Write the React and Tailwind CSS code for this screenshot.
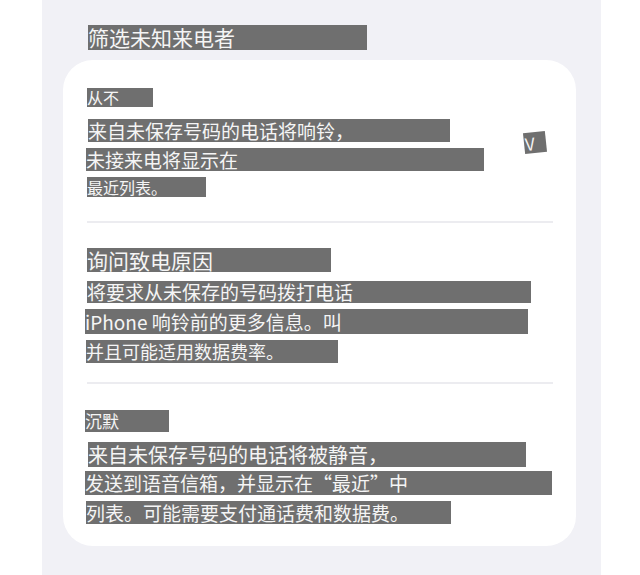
export default function App() {
  const box = 'bg-[#6f6f6f] text-[#f5f5f5] whitespace-nowrap';
  return (
    <div className="w-[640px] h-[575px] bg-white overflow-hidden" style={{ fontFamily: '"Noto Sans CJK SC", "Noto Sans", sans-serif' }}>
      <div className="ml-[42px] w-[559px] h-full bg-[#f1f1f6] pt-[25px]">
        {/* Title */}
        <div className={`${box} ml-[46px] w-[279px] h-[25px] text-[21px] leading-[25px]`}>筛选未知来电者</div>

        {/* Card */}
        <div className="mt-[10px] ml-[21px] w-[513px] h-[486px] rounded-[30px] bg-white pl-[24px] pt-[28px]">
          {/* Section 1 */}
          <div className={`${box} w-[66px] h-[19px] text-[16px] leading-[19px]`}>从不</div>
          <div className="flex">
            <div>
              <div className={`${box} mt-[12px] ml-[1px] w-[362px] h-[23px] text-[19px] leading-[23px]`}>来自未保存号码的电话将响铃，</div>
              <div className={`${box} mt-[6px] -ml-[1px] w-[398px] h-[23px] text-[19px] leading-[23px]`}>未接来电将显示在</div>
              <div className={`${box} mt-[6px] w-[119px] h-[20px] text-[16px] leading-[20px]`}>最近列表。</div>
            </div>
            <div className={`${box} mt-[25px] ml-[40px] w-[22px] h-[21px] text-[17px] leading-[21px] pl-[1px] -rotate-[6deg] self-start`}>V</div>
          </div>

          <div className="mt-[24px] w-[466px] h-[2px] bg-[#ececf0]"></div>

          {/* Section 2 */}
          <div className={`${box} mt-[25px] w-[244px] h-[24px] text-[21px] leading-[24px]`}>询问致电原因</div>
          <div className={`${box} mt-[9px] w-[444px] h-[22px] text-[19px] leading-[22px]`}>将要求从未保存的号码拨打电话</div>
          <div className={`${box} mt-[6px] -ml-[2px] w-[443px] h-[25px] text-[19px] leading-[25px]`}>iPhone 响铃前的更多信息。叫</div>
          <div className={`${box} mt-[6px] -ml-[1px] w-[252px] h-[23px] text-[18px] leading-[23px]`}>并且可能适用数据费率。</div>

          <div className="mt-[19px] w-[466px] h-[2px] bg-[#ececf0]"></div>

          {/* Section 3 */}
          <div className={`${box} mt-[26px] -ml-[2px] w-[84px] h-[22px] text-[17px] leading-[22px]`}>沉默</div>
          <div className={`${box} mt-[10px] ml-[1px] w-[438px] h-[25px] text-[20px] leading-[25px]`}>来自未保存号码的电话将被静音，</div>
          <div className={`${box} mt-[4px] -ml-[2px] w-[467px] h-[24px] text-[19px] leading-[24px]`}>发送到语音信箱，并显示在“最近”中</div>
          <div className={`${box} mt-[6px] -ml-[1px] w-[365px] h-[23px] text-[19px] leading-[23px]`}>列表。可能需要支付通话费和数据费。</div>
        </div>
      </div>
    </div>
  );
}
